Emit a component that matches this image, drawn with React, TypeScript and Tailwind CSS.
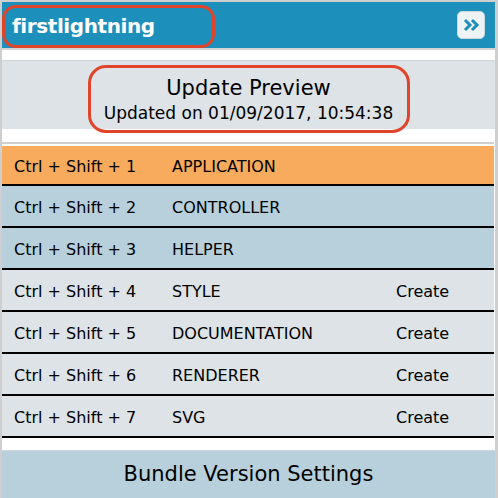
import React from "react";

const rows = [
  { key: "1", name: "APPLICATION", bg: "bg-[#f8ab5c]", create: false, h: "h-[38px]" },
  { key: "2", name: "CONTROLLER", bg: "bg-[#b7d0dc]", create: false, h: "h-[40px]" },
  { key: "3", name: "HELPER", bg: "bg-[#b7d0dc]", create: false, h: "h-[40px]" },
  { key: "4", name: "STYLE", bg: "bg-[#dde3e6]", create: true, h: "h-[40px]" },
  { key: "5", name: "DOCUMENTATION", bg: "bg-[#dde3e6]", create: true, h: "h-[40px]" },
  { key: "6", name: "RENDERER", bg: "bg-[#dde3e6]", create: true, h: "h-[40px]" },
  { key: "7", name: "SVG", bg: "bg-[#dde3e6]", create: true, h: "h-[40px]" },
];

export default function App() {
  return (
    <div className="w-[498px] h-[498px] overflow-hidden bg-white border-t-2 border-l-2 border-r-[3px] border-[#cfcfcf] font-['DejaVu_Sans',sans-serif] text-black">
      <div className="h-[48px] bg-[#1c8fbb] flex items-center justify-between border-b-2 border-[#d4d4d4]">
        <div className="h-[43px] w-[213px] mt-[2px] rounded-[14px] border-[3px] border-[#e0452b] flex items-center pl-[7px]">
          <span className="text-white font-bold text-[20px] tracking-[-0.4px] leading-[24px]">firstlightning</span>
        </div>
        <div className="mr-[10px] w-[28px] h-[28px] rounded-[5px] bg-[#eef3f5] border border-[#c9d6dc] flex items-center justify-center">
          <svg width="18" height="16" viewBox="0 0 18 16">
            <path d="M3 3 L8 8 L3 13" fill="none" stroke="#1c8fbb" strokeWidth="3" />
            <path d="M10 3 L15 8 L10 13" fill="none" stroke="#1c8fbb" strokeWidth="3" />
          </svg>
        </div>
      </div>
      <div className="h-[10px]" />
      <div className="h-[69px] bg-[#dde3e6] border-t border-[#cfd6da] flex justify-center">
        <div className="mt-[4px] h-[68px] w-[322px] shrink-0 rounded-[18px] border-[3px] border-[#e0452b] flex flex-col items-center justify-center">
          <div className="text-[21px] leading-[28px]">Update Preview</div>
          <div className="text-[17px] leading-[22px]">Updated on 01/09/2017, 10:54:38</div>
        </div>
      </div>
      <div className="h-[13px]" />
      <div className="h-[2px] bg-[#cfcfcf] mr-[1px]" />
      <div className="h-[2px]" />
      <div className="mr-[1px]">
        {rows.map((r) => (
          <div key={r.key} className={`${r.bg} ${r.h} flex items-center border-b-2 border-black box-content text-[16px]`}>
            <div className="w-[158px] pl-[12px] pt-[3px] box-content">Ctrl + Shift + {r.key}</div>
            <div className="w-[224px] pt-[3px]">{r.name}</div>
            <div className="pt-[3px]">{r.create ? "Create" : ""}</div>
          </div>
        ))}
      </div>
      <div className="h-[12px]" />
      <div className="h-[48px] bg-[#b7d0dc] border-t border-[#cfd6da] flex items-center justify-center text-[21px]">
        Bundle Version Settings
      </div>
    </div>
  );
}
